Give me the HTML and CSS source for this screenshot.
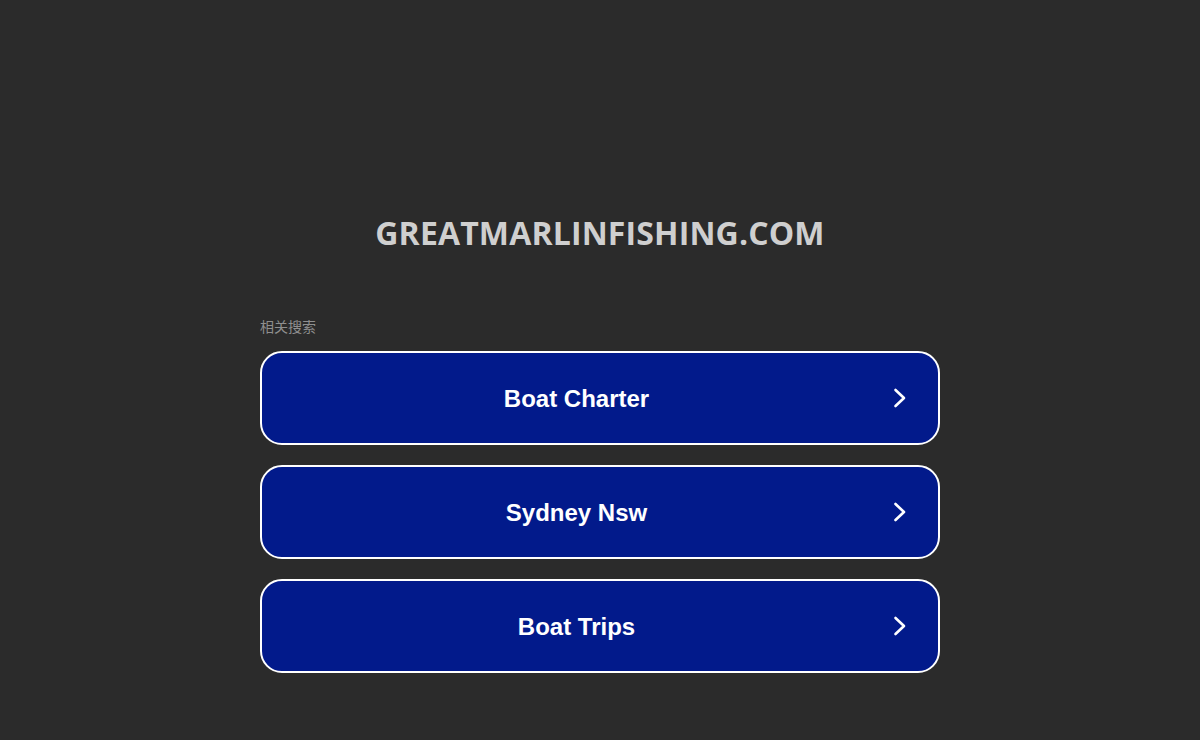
FILE: index.html
```html
<!DOCTYPE html>
<html>
<head>
<meta charset="utf-8">
<link rel="stylesheet" href="styles.css">
</head>
<body>
<div class="page">
  <h1 class="domain">GREATMARLINFISHING.COM</h1>
  <div class="related">
    <div class="label">相关搜索</div>
    <a class="btn" href="#"><span class="btn-text">Boat Charter</span><svg class="chev" viewBox="0 0 14 20" width="14" height="20"><path d="M2.5 2 L11 10 L2.5 18" fill="none" stroke="#fff" stroke-width="2.6" stroke-linecap="round" stroke-linejoin="round"/></svg></a>
    <a class="btn" href="#"><span class="btn-text">Sydney Nsw</span><svg class="chev" viewBox="0 0 14 20" width="14" height="20"><path d="M2.5 2 L11 10 L2.5 18" fill="none" stroke="#fff" stroke-width="2.6" stroke-linecap="round" stroke-linejoin="round"/></svg></a>
    <a class="btn" href="#"><span class="btn-text">Boat Trips</span><svg class="chev" viewBox="0 0 14 20" width="14" height="20"><path d="M2.5 2 L11 10 L2.5 18" fill="none" stroke="#fff" stroke-width="2.6" stroke-linecap="round" stroke-linejoin="round"/></svg></a>
  </div>
</div>
</body>
</html>
```
FILE: styles.css
```css
html, body {
  margin: 0;
  padding: 0;
  background: #2b2b2b;
}
.page {
  display: flex;
  flex-direction: column;
  align-items: center;
  padding-top: 211px;
}
.domain {
  margin: 0;
  font-family: "Open Sans", "DejaVu Sans", sans-serif;
  font-weight: 700;
  font-size: 32px;
  line-height: 44px;
  color: #cfcfcf;
  letter-spacing: 0.15px;
}
.related {
  width: 680px;
  margin-top: 62px;
  display: flex;
  flex-direction: column;
}
.label {
  font-family: "Noto Sans CJK SC", "Liberation Sans", sans-serif;
  font-size: 14px;
  line-height: 18px;
  color: #8f8f8f;
  margin-bottom: 16px;
}
.btn {
  display: flex;
  align-items: center;
  box-sizing: border-box;
  height: 94px;
  border: 2px solid #ffffff;
  border-radius: 22px;
  background: #021a8b;
  text-decoration: none;
  margin-bottom: 20px;
  padding-right: 31px;
}
.btn-text {
  flex: 1;
  text-align: center;
  font-family: "Liberation Sans", Arial, sans-serif;
  font-weight: 700;
  font-size: 24px;
  color: #ffffff;
  padding-top: 2px;
  padding-right: 2px;
}
.chev {
  display: block;
}
```
